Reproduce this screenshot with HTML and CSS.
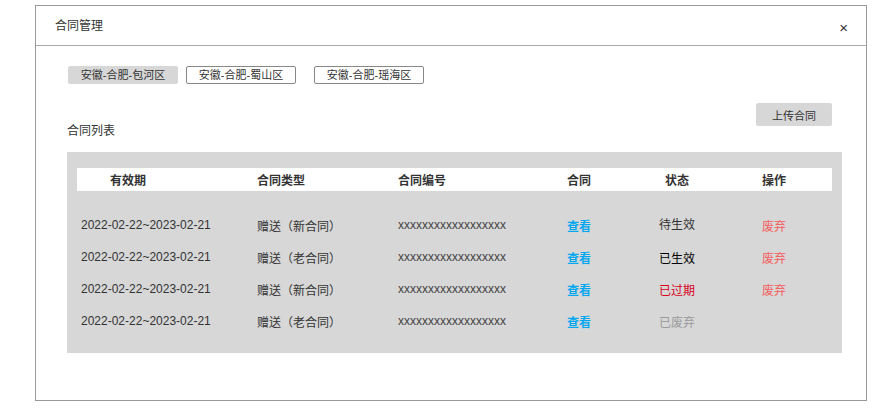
FILE: index.html
```html
<!DOCTYPE html>
<html lang="zh-CN">
<head>
    <meta charset="UTF-8">
    <meta name="viewport" content="width=device-width, initial-scale=1.0">
    <title>合同管理</title>
    <link rel="stylesheet" href="styles.css">
</head>
<body>
    <div class="dialog">
        <div class="dialog-header">
            <span class="dialog-title">合同管理</span>
            <span class="dialog-close">&#215;</span>
        </div>
        <div class="dialog-body">
            <div class="tags">
                <span class="tag active">安徽-合肥-包河区</span>
                <span class="tag">安徽-合肥-蜀山区</span>
                <span class="tag tag-far">安徽-合肥-瑶海区</span>
            </div>
            <div class="toolbar">
                <button class="upload-button">上传合同</button>
            </div>
            <div class="list-title">合同列表</div>
            <div class="list-panel">
                <div class="list-row list-head">
                    <div class="col-date">有效期</div>
                    <div>合同类型</div>
                    <div>合同编号</div>
                    <div>合同</div>
                    <div class="col-status">状态</div>
                    <div>操作</div>
                </div>
                <div class="list-rows">
                    <div class="list-row">
                        <div class="col-date">2022-02-22~2023-02-21</div>
                        <div>赠送（新合同）</div>
                        <div class="code">xxxxxxxxxxxxxxxxxx</div>
                        <div class="link">查看</div>
                        <div class="status-pending">待生效</div>
                        <div class="discard">废弃</div>
                    </div>
                    <div class="list-row">
                        <div class="col-date">2022-02-22~2023-02-21</div>
                        <div>赠送（老合同）</div>
                        <div class="code">xxxxxxxxxxxxxxxxxx</div>
                        <div class="link">查看</div>
                        <div class="status-active">已生效</div>
                        <div class="discard">废弃</div>
                    </div>
                    <div class="list-row">
                        <div class="col-date">2022-02-22~2023-02-21</div>
                        <div>赠送（新合同）</div>
                        <div class="code">xxxxxxxxxxxxxxxxxx</div>
                        <div class="link">查看</div>
                        <div class="status-expired">已过期</div>
                        <div class="discard">废弃</div>
                    </div>
                    <div class="list-row">
                        <div class="col-date">2022-02-22~2023-02-21</div>
                        <div>赠送（老合同）</div>
                        <div class="code">xxxxxxxxxxxxxxxxxx</div>
                        <div class="link">查看</div>
                        <div class="status-discarded">已废弃</div>
                        <div></div>
                    </div>
                </div>
            </div>
        </div>
    </div>
</body>
</html>
```

FILE: styles.css
```css
body {
    margin: 0;
    padding: 0;
    background-color: white;
    font-family: "Liberation Sans", "Noto Sans CJK SC", sans-serif;
    font-size: 12px;
    color: #333333;
}

/* Dialog frame */
.dialog {
    margin: 5px 0 0 35px;
    width: 830px;
    height: 394px;
    border: 1px solid #999999;
    box-sizing: content-box;
}

.dialog-header {
    height: 39px;
    border-bottom: 1px solid #aaaaaa;
    display: flex;
    align-items: center;
    justify-content: space-between;
    padding: 0 18px 0 19px;
}

.dialog-title {
    font-size: 12px;
    color: #333333;
    margin-top: -2px;
}

.dialog-close {
    font-size: 15px;
    color: #333333;
    margin-top: 4px;
}

.dialog-body {
    padding: 20px 24px 0 31px;
}

/* Region tags */
.tags {
    display: flex;
    gap: 8px;
    padding-left: 1px;
}

.tag {
    width: 108px;
    height: 16px;
    line-height: 16px;
    text-align: center;
    border: 1px solid #888888;
    border-radius: 2px;
    font-size: 11px;
    color: #333333;
}

.tag.active {
    background-color: #d7d7d7;
    border-color: #d7d7d7;
}

.tag-far {
    margin-left: 10px;
}

/* Upload button */
.toolbar {
    display: flex;
    justify-content: flex-end;
    margin-top: 19px;
    padding-right: 10px;
}

.upload-button {
    width: 76px;
    height: 23px;
    padding: 0;
    border: none;
    border-radius: 2px;
    background-color: #d7d7d7;
    font-family: inherit;
    font-size: 11px;
    color: #333333;
}

.list-title {
    margin-top: -3px;
    line-height: 16px;
}

/* Contract list */
.list-panel {
    margin-top: 13px;
    background-color: #d7d7d7;
    padding: 16px 10px 16px 10px;
}

.list-row {
    display: grid;
    grid-template-columns: 180px 141px 169px 92px 103px 1fr;
    align-items: center;
    height: 32px;
}

.list-head {
    height: 23px;
    background-color: white;
    font-weight: bold;
}

.list-head .col-date {
    padding-left: 33px;
}

.list-head .col-status {
    padding-left: 6px;
}

.list-rows {
    margin-top: 18px;
}

.list-rows .col-date {
    padding-left: 4px;
}

.code {
    font-size: 12px;
    color: #444444;
}

.link {
    color: #02a7f0;
    font-weight: bold;
}

.status-pending {
    color: #333333;
    margin-top: -3px;
}

.status-active {
    color: #000000;
}

.status-expired {
    color: #d9001b;
}

.status-discarded {
    color: #999999;
}

.discard {
    color: #f55a5a;
}
```
